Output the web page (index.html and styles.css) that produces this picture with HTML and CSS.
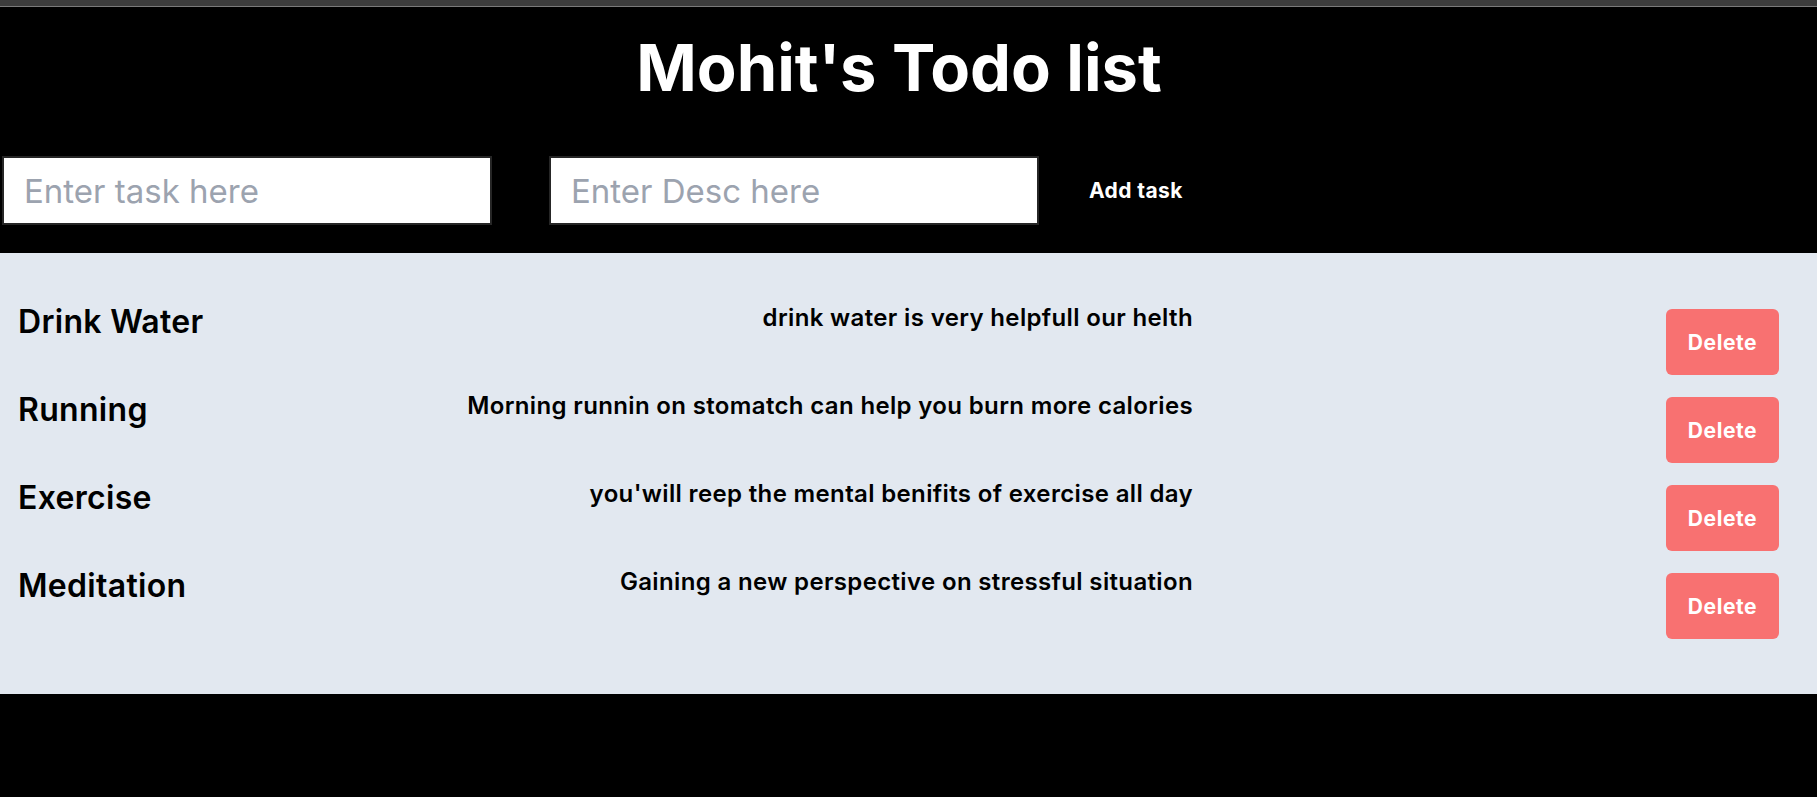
FILE: index.html
```html
<!DOCTYPE html>
<html lang="en">
<head>
<meta charset="utf-8">
<title>Mohit's Todo list</title>
<link rel="stylesheet" href="styles.css">
</head>
<body>
<div class="topbar"></div>
<header class="header">
  <h1 class="title">Mohit's Todo list</h1>
  <form class="add-form">
    <input class="field" type="text" placeholder="Enter task here">
    <input class="field field-desc" type="text" placeholder="Enter Desc here">
    <button class="add-btn" type="button">Add task</button>
  </form>
</header>
<main class="list">
  <div class="row">
    <div class="task-title">Drink Water</div>
    <div class="task-desc">drink water is very helpfull our helth</div>
    <button class="del-btn" type="button">Delete</button>
  </div>
  <div class="row">
    <div class="task-title">Running</div>
    <div class="task-desc">Morning runnin on stomatch can help you burn more calories</div>
    <button class="del-btn" type="button">Delete</button>
  </div>
  <div class="row">
    <div class="task-title">Exercise</div>
    <div class="task-desc">you'will reep the mental benifits of exercise all day</div>
    <button class="del-btn" type="button">Delete</button>
  </div>
  <div class="row">
    <div class="task-title">Meditation</div>
    <div class="task-desc">Gaining a new perspective on stressful situation</div>
    <button class="del-btn" type="button">Delete</button>
  </div>
</main>
</body>
</html>
```

FILE: styles.css
```css
* { box-sizing: border-box; }

html, body {
  margin: 0;
  padding: 0;
  background: #000;
  font-family: Inter, "Noto Sans", sans-serif;
}

.topbar {
  height: 7px;
  background: #3c3c3c;
  border-bottom: 1px solid #7a7a7a;
}

.header {
  background: #000;
  padding: 29px 0 28px;
}

.title {
  margin: 0;
  color: #fff;
  font-size: 65px;
  line-height: 64px;
  font-weight: 700;
  text-align: center;
  padding-right: 19px;
}

.add-form {
  display: flex;
  align-items: center;
  margin-top: 56px;
  padding-left: 2px;
}

.field {
  width: 490px;
  height: 69px;
  border: 2px solid #262626;
  background: #fff;
  padding: 0 20px;
  font-family: Inter, "Noto Sans", sans-serif;
  font-size: 33px;
  color: #111;
  outline: none;
}

.field::placeholder { color: #9ca3af; }

.field-desc { margin-left: 57px; }

.add-btn {
  margin-left: 50px;
  background: none;
  border: 0;
  color: #fff;
  font-family: Inter, "Noto Sans", sans-serif;
  font-size: 21px;
  font-weight: 700;
  letter-spacing: 0.4px;
  padding: 0;
}

.list {
  background: #e2e8f0;
  padding: 50px 38px 55px 18px;
  display: flex;
  flex-direction: column;
  gap: 16px;
}

.row {
  display: flex;
  align-items: flex-start;
}

.task-title {
  flex: 1;
  margin-top: 1px;
  font-size: 32px;
  line-height: 36px;
  font-weight: 600;
  letter-spacing: 0.3px;
  color: #000;
}

.task-desc {
  margin-top: -1px;
  margin-right: 473px;
  font-size: 24px;
  line-height: 32px;
  font-weight: 600;
  letter-spacing: 0.35px;
  color: #000;
  text-align: right;
}

.del-btn {
  margin-top: 6px;
  width: 113px;
  height: 66px;
  border: 0;
  border-radius: 6px;
  background: #f87171;
  color: #fff;
  font-family: Inter, "Noto Sans", sans-serif;
  font-size: 21px;
  font-weight: 700;
  letter-spacing: 0.6px;
}
```
